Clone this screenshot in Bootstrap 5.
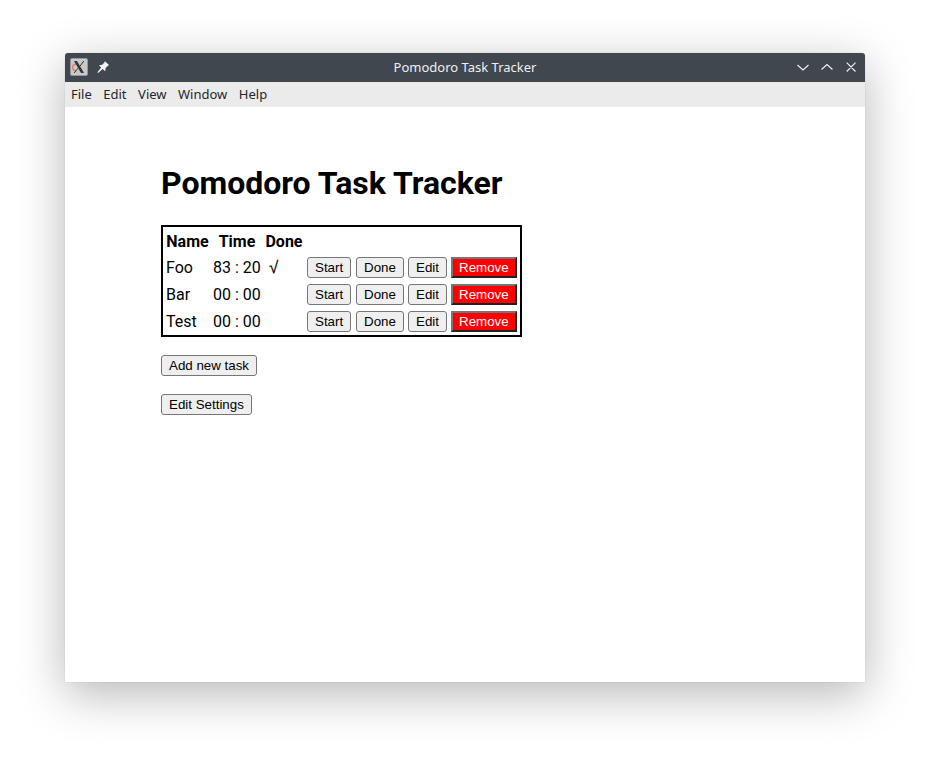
<!DOCTYPE html>
<html lang="en">
<head>
<meta charset="utf-8">
<meta name="viewport" content="width=device-width, initial-scale=1">
<title>Pomodoro Task Tracker</title>
<link href="https://cdn.jsdelivr.net/npm/bootstrap@5.3.0/dist/css/bootstrap.min.css" rel="stylesheet">
<style>
  body { font-family: Roboto, sans-serif; color: #000; background: #fff; padding: 53px 65px 77px; }
  .app-window { height: 629px; background: #fff; border-radius: 4px 4px 0 0; box-shadow: 0 0 1px rgba(0,0,0,.3), 0 12px 48px rgba(0,0,0,.29); }
  .title-strip { height: 29px; background: #40474e; color: #eff0f1; border-radius: 3px 3px 0 0; padding: 0 5px 1px; font: 13px/28px "Noto Sans", sans-serif; }
  .side-slot { width: 100px; }
  .menu-strip { height: 25px; background: #ebebeb; padding: 0 6px; gap: 11.5px; font: 13px/25px "Noto Sans", sans-serif; }
  .menu-strip a { color: #232629; }
  .page-area { padding: 57px 96px 0; }
  .page-title { font-size: 32px; line-height: 38px; font-weight: 700; margin-bottom: 23px; }
  .task-table { width: 361px; table-layout: fixed; border: 2px solid #000; border-collapse: separate; border-spacing: 2px; line-height: 21px; white-space: nowrap; }
  .task-table th { padding: 2px 1px 0; }
  .task-table td { height: 25px; padding: 3px 1px 1px; }
  .col-name { width: 45px; }
  .col-time, .col-finish { width: 50px; }
  .col-check { width: 40px; }
  .col-start { width: 47px; }
  .col-edit { width: 41px; }
  .col-remove { width: 68px; }
  .check-glyph { font-family: "Noto Sans", sans-serif; font-size: 17px; line-height: 1; -webkit-text-stroke: .2px #000; }
  .plain-btn { display: block; height: 21px; padding: 2px 7px; border: 1px solid #767676; border-radius: 3px; background: #efefef; color: #000; font: 13.333px/15px "Liberation Sans", Arial, sans-serif; }
  .remove-btn { padding: 1px 6px; border: 2px solid; border-color: #767676 #212121 #212121 #767676; border-radius: 0; background: #f00; color: #fff; }
  .bottom-actions { margin-top: 18px; gap: 18px; }
</style>
</head>
<body>
<div class="app-window d-flex flex-column">
  <header class="title-strip d-flex justify-content-between align-items-center">
    <div class="side-slot d-flex align-items-center">
      <svg width="18" height="18" viewBox="0 0 18 18" aria-hidden="true">
        <rect x=".5" y=".5" width="17" height="17" rx="1.5" fill="#c4cbd0" stroke="#929a9f"/>
        <ellipse cx="9" cy="9.5" rx="6.3" ry="4.3" fill="none" stroke="#e9bd91" stroke-width="1.2"/>
        <path d="M6.5 5.8C1.5 7 1.2 11.5 6 13" fill="none" stroke="#e87e55" stroke-width="1.4"/>
        <path d="M4 3h3l7 12h-3z" fill="#30363a"/>
        <path d="M13.8 3L9.9 8.3M8 10.2L4.2 15" stroke="#30363a" stroke-width="1"/>
      </svg>
      <svg class="ms-2" width="14" height="14" viewBox="0 0 14 14" fill="#f3f4f4" aria-hidden="true">
        <path d="M9 1.2L13 5.1L11.7 6L9.6 8L9.2 11.2L6.7 9L2.1 13L1.4 12.3L5.2 7.5L3 5.2L6.3 4.8L8.3 2.6z"/>
      </svg>
    </div>
    <span>Pomodoro Task Tracker</span>
    <div class="side-slot d-flex justify-content-end">
      <svg width="64" height="16" viewBox="0 0 64 16" fill="none" stroke="#f2f3f3" stroke-width="1.1" aria-hidden="true">
        <path d="M1.5 6L7 11L12.5 6M25.5 10.5L31 5.5L36.5 10.5M50.7 3.7l8.8 8.8M59.5 3.7l-8.8 8.8"/>
      </svg>
    </div>
  </header>
  <nav class="menu-strip d-flex">
    <a class="text-decoration-none">File</a>
    <a class="text-decoration-none">Edit</a>
    <a class="text-decoration-none">View</a>
    <a class="text-decoration-none">Window</a>
    <a class="text-decoration-none">Help</a>
  </nav>
  <main class="page-area flex-grow-1">
    <h1 class="page-title">Pomodoro Task Tracker</h1>
    <table class="task-table">
      <colgroup><col class="col-name"><col class="col-time"><col class="col-check"><col class="col-start"><col class="col-finish"><col class="col-edit"><col class="col-remove"></colgroup>
      <thead>
        <tr class="text-center"><th>Name</th><th>Time</th><th>Done</th><th></th><th></th><th></th><th></th></tr>
      </thead>
      <tbody>
        <tr>
          <td>Foo</td><td>83 : 20</td><td>&nbsp;<span class="check-glyph">√</span></td>
          <td><button class="plain-btn">Start</button></td><td><button class="plain-btn">Done</button></td><td><button class="plain-btn">Edit</button></td><td><button class="plain-btn remove-btn">Remove</button></td>
        </tr>
        <tr>
          <td>Bar</td><td>00 : 00</td><td></td>
          <td><button class="plain-btn">Start</button></td><td><button class="plain-btn">Done</button></td><td><button class="plain-btn">Edit</button></td><td><button class="plain-btn remove-btn">Remove</button></td>
        </tr>
        <tr>
          <td>Test</td><td>00 : 00</td><td></td>
          <td><button class="plain-btn">Start</button></td><td><button class="plain-btn">Done</button></td><td><button class="plain-btn">Edit</button></td><td><button class="plain-btn remove-btn">Remove</button></td>
        </tr>
      </tbody>
    </table>
    <div class="bottom-actions d-flex flex-column align-items-start">
      <button class="plain-btn">Add new task</button>
      <button class="plain-btn">Edit Settings</button>
    </div>
  </main>
</div>
<script src="https://cdn.jsdelivr.net/npm/bootstrap@5.3.0/dist/js/bootstrap.bundle.min.js"></script>
</body>
</html>
